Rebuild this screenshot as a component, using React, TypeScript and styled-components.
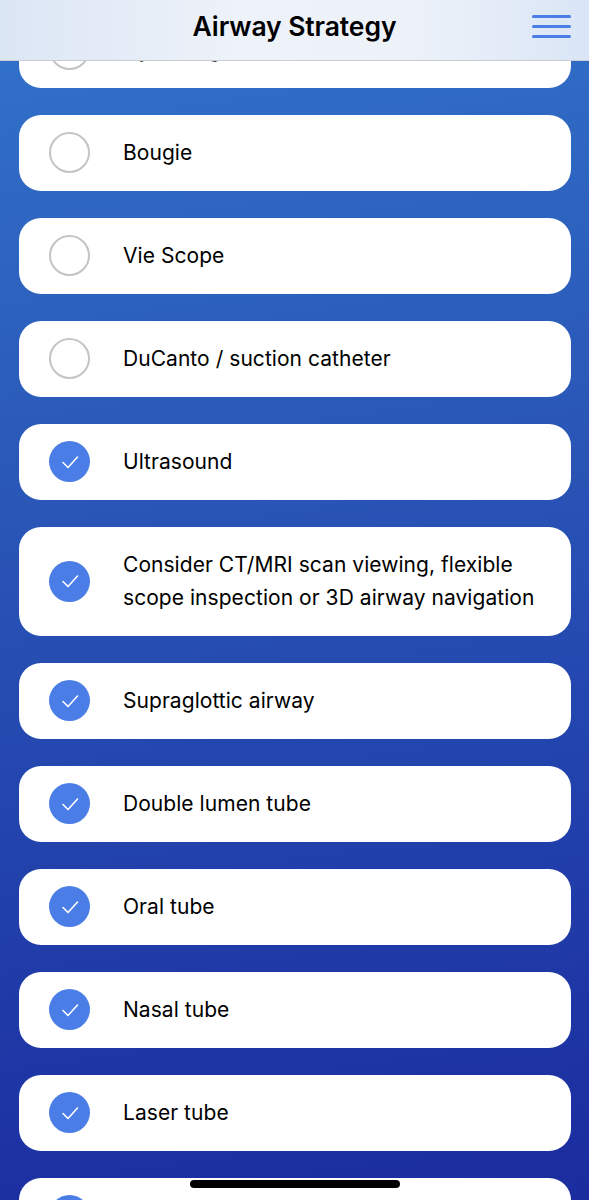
import React from "react";
import styled, { createGlobalStyle } from "styled-components";

const Global = createGlobalStyle`
  html, body { margin: 0; padding: 0; }
  body {
    background: linear-gradient(172deg, #3273cb 0%, #2a58b8 35%, #2140ab 65%, #1a279c 100%);
    min-height: 1200px;
    font-family: Inter, "Noto Sans", sans-serif;
    -webkit-font-smoothing: antialiased;
  }
`;

const Header = styled.header`
  position: fixed;
  top: 0;
  left: 0;
  right: 0;
  height: 61px;
  z-index: 10;
  display: flex;
  align-items: center;
  justify-content: center;
  background: linear-gradient(90deg, #dbe6f5 0%, #eef2f9 40%, #edf2f9 70%, #d9e5f6 100%);
  border-bottom: 1px solid #c9ced6;
  box-sizing: border-box;
`;

const Title = styled.h1`
  margin: 0;
  font-family: Inter, "Noto Sans", sans-serif;
  font-weight: 600;
  font-size: 26.5px;
  color: #000;
  letter-spacing: -0.1px;
  padding-bottom: 8px;
`;

const MenuButton = styled.button`
  position: absolute;
  right: 18px;
  top: 15px;
  width: 39px;
  height: 23px;
  padding: 0;
  border: 0;
  background: transparent;
  display: flex;
  flex-direction: column;
  justify-content: space-between;
`;

const MenuLine = styled.span`
  display: block;
  height: 3px;
  border-radius: 2px;
  background: #4a7de6;
`;

const List = styled.main`
  display: flex;
  flex-direction: column;
  gap: 27px;
  padding: 12px 18px 40px 19px;
`;

const Card = styled.div`
  background: #fff;
  border-radius: 22px;
  display: flex;
  align-items: center;
  padding: 21px 16px 22px 30px;
`;

const Circle = styled.span<{ $checked: boolean }>`
  flex: 0 0 auto;
  width: 41px;
  height: 41px;
  margin: -4px 0;
  border-radius: 50%;
  box-sizing: border-box;
  display: flex;
  align-items: center;
  justify-content: center;
  background: ${(p) => (p.$checked ? "#4a7de6" : "#fff")};
  border: ${(p) => (p.$checked ? "none" : "2px solid #c4c4c4")};
`;

const Label = styled.span`
  margin-left: 33px;
  font-size: 21px;
  line-height: 33px;
  color: #000;
  letter-spacing: 0.05px;
`;

const HomeIndicator = styled.div`
  position: fixed;
  left: 190px;
  bottom: 12px;
  width: 210px;
  height: 8px;
  border-radius: 4px;
  background: #000;
  z-index: 20;
`;

const Check = () => (
  <svg width="22" height="22" viewBox="0 0 22 22" fill="none">
    <path d="M4 11.5 L9 16.5 L18.5 6" stroke="#fff" strokeWidth="1.6" strokeLinecap="round" strokeLinejoin="round" />
  </svg>
);

const items: { label: React.ReactNode; checked: boolean }[] = [
  { label: "Hyperangulated blade", checked: false },
  { label: "Bougie", checked: false },
  { label: "Vie Scope", checked: false },
  { label: "DuCanto / suction catheter", checked: false },
  { label: "Ultrasound", checked: true },
  {
    label: (
      <>
        Consider CT/MRI scan viewing, flexible
        <br />
        scope inspection or 3D airway navigation
      </>
    ),
    checked: true,
  },
  { label: "Supraglottic airway", checked: true },
  { label: "Double lumen tube", checked: true },
  { label: "Oral tube", checked: true },
  { label: "Nasal tube", checked: true },
  { label: "Laser tube", checked: true },
  { label: "Tracheostomy", checked: true },
];

export default function App() {
  return (
    <>
      <Global />
      <Header>
        <Title>Airway Strategy</Title>
        <MenuButton aria-label="Menu">
          <MenuLine />
          <MenuLine />
          <MenuLine />
        </MenuButton>
      </Header>
      <List>
        {items.map((it, i) => (
          <Card key={i}>
            <Circle $checked={it.checked}>{it.checked && <Check />}</Circle>
            <Label>{it.label}</Label>
          </Card>
        ))}
      </List>
      <HomeIndicator />
    </>
  );
}
